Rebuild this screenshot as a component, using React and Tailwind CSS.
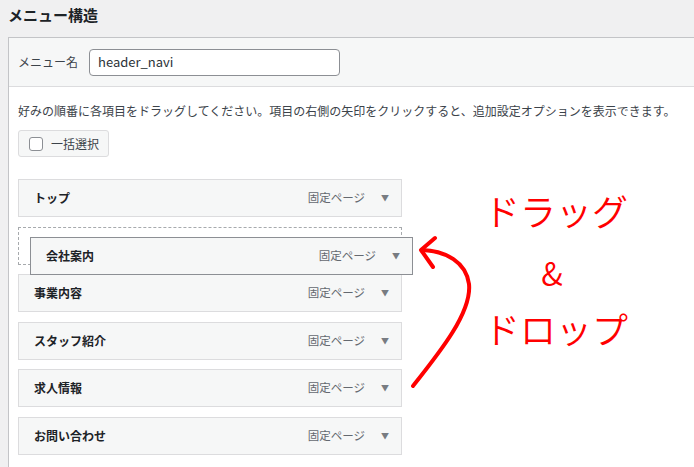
import React from 'react';

const FONT = { fontFamily: '"Noto Sans CJK JP", "Noto Sans", sans-serif' };

const items = ['トップ', '会社案内', '事業内容', 'スタッフ紹介', '求人情報', 'お問い合わせ'];

const MenuItem = ({ title, className = '' }) => (
  <div className={`h-[38px] w-[384px] flex items-center justify-between pl-[15px] pr-[12px] bg-[#f6f7f7] border border-[#dcdcde] ${className}`}>
    <span className="text-[12px] font-bold text-[#1d2327]">{title}</span>
    <span className="flex items-center gap-[16px]">
      <span className="text-[11.5px] text-[#646970]">固定ページ</span>
      <span className="text-[8px] text-[#787c82]">▼</span>
    </span>
  </div>
);

const Annotation = () => (
  <>
    <span className="absolute left-[476px] top-[192px] w-[160px] text-center text-[36px] leading-none font-[350] text-[#ff0000]">ドラッグ</span>
    <span className="absolute left-[472px] top-[256px] w-[160px] text-center text-[32px] leading-none font-[350] text-[#ff0000]">&amp;</span>
    <span className="absolute left-[476px] top-[310px] w-[160px] text-center text-[36px] leading-none font-[350] text-[#ff0000]">ドロップ</span>
    <svg className="absolute left-0 top-0" width="694" height="467" viewBox="0 0 694 467" fill="none">
      <path d="M413 386 C440 352 472 312 469 284 C466 262 446 251 422 250" stroke="#ff0000" strokeWidth="4" strokeLinecap="round" />
      <path d="M435 238 L421 250 L433 267" stroke="#ff0000" strokeWidth="4" strokeLinecap="round" strokeLinejoin="round" />
    </svg>
  </>
);

export default function App() {
  return (
    <div className="relative w-[694px] h-[467px] overflow-hidden bg-[#f0f0f1]" style={FONT}>
      <h2 className="pl-2 pt-[3px] h-[37px] text-[15px] font-bold text-[#1d2327] leading-[24px]">メニュー構造</h2>
      <div className="ml-2 border-l border-t border-[#c3c4c7] bg-white h-[430px]">
        <div className="h-[49px] flex items-center pl-[9px] bg-[#f6f7f7] border-b border-[#dcdcde]">
          <span className="text-[12px] text-[#3c434a]">メニュー名</span>
          <div className="ml-[11px] w-[251px] h-[27px] flex items-center px-2 bg-white border border-[#8c8f94] rounded-[4px] text-[13px] text-[#2c3338]">header_navi</div>
        </div>
        <div className="relative px-[9px] pt-[15px]">
          <p className="text-[12px] leading-[18px] text-[#3c434a]">好みの順番に各項目をドラッグしてください。項目の右側の矢印をクリックすると、追加設定オプションを表示できます。</p>
          <div className="mt-[10px] w-[91px] h-[27px] flex items-center gap-[8px] pl-[10px] bg-[#f6f7f7] border border-[#dcdcde] rounded-[3px]">
            <span className="w-[14px] h-[14px] border border-[#8c8f94] rounded-[3px] bg-white" />
            <span className="text-[12px] text-[#3c434a]">一括選択</span>
          </div>
          <div className="mt-[22px] flex flex-col gap-[9.5px]">
            <MenuItem title={items[0]} />
            <div className="h-[38px] w-[384px] border border-dashed border-[#a7aaad]" />
            {items.slice(2).map((t) => (
              <MenuItem key={t} title={t} />
            ))}
          </div>
        </div>
      </div>
      <div className="absolute left-[30px] top-[237px]">
        <MenuItem title={items[1]} className="!w-[383px] !border-[#8c8f94]" />
      </div>
      <Annotation />
    </div>
  );
}
